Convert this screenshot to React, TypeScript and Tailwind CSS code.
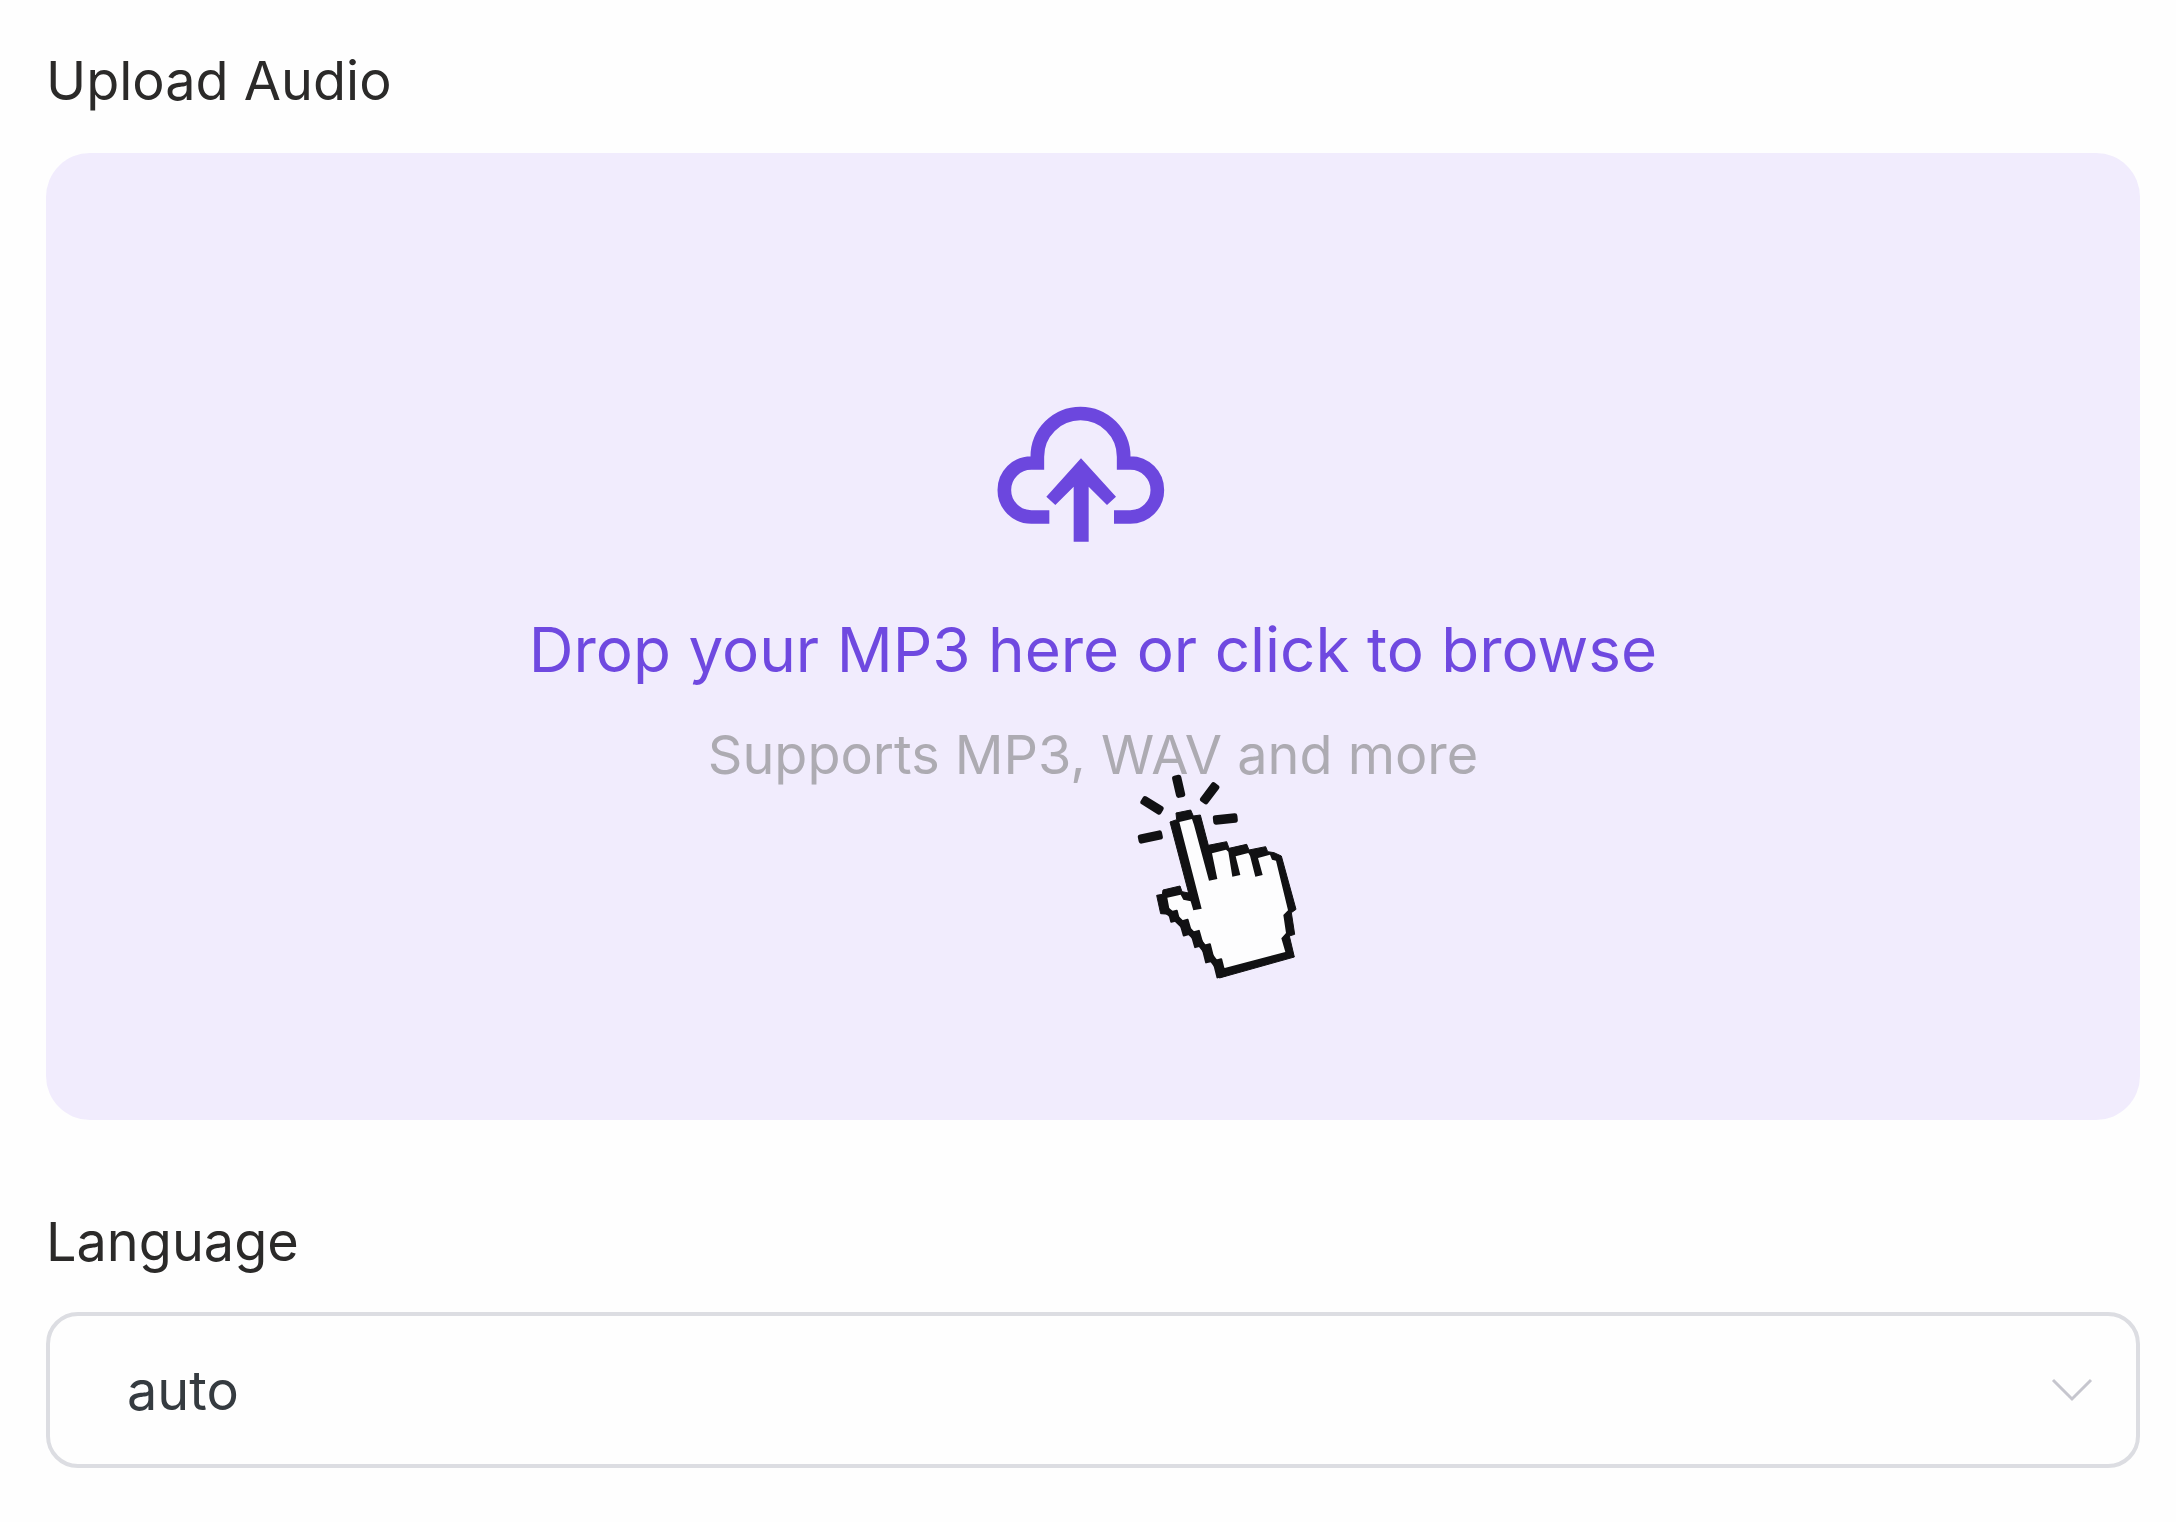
const labelStyle = "block text-[54px] leading-[64px] text-[#2b2a29]";

function CloudUploadIcon() {
  return (
    <svg viewBox="50 48 504 408" className="mr-[24px] h-[136px] w-[168px]" aria-hidden="true">
      <path
        d="M207 381H153a81 81 0 0 1 0-162h18v-19a129.500 129.500 0 0 1 259 0v19h20a81 81 0 0 1 0 162h-49"
        fill="none"
        stroke="#6c47de"
        strokeWidth="41"
      />
      <path d="M302 205 407 320 380 345 325 290V455H280V290L225 345 198 320Z" fill="#6c47de" />
    </svg>
  );
}

function ClickCursor() {
  return (
    <svg
      viewBox="0 0 600 690"
      className="pointer-events-none absolute top-1/2 left-1/2 mt-[124px] ml-[27px] h-[230px] w-[200px]"
      aria-hidden="true"
    >
      <g fill="#111113">
        <rect x="-34" y="-14" width="68" height="28" rx="8" transform="translate(176 76) rotate(77)" />
        <rect x="-35" y="-14" width="70" height="28" rx="8" transform="translate(269 97) rotate(-53)" />
        <rect x="-36" y="-14" width="72" height="28" rx="8" transform="translate(96 133) rotate(32)" />
        <rect x="-37" y="-14" width="74" height="28" rx="8" transform="translate(91 228) rotate(-12)" />
        <rect x="-37" y="-14" width="74" height="28" rx="8" transform="translate(316 174) rotate(-6)" />
        <path
          stroke="#111113"
          strokeWidth="3"
          strokeLinejoin="round"
          d="M150 183 170 176 168 156 212 147 220 165 241 162 265 253 320 242 327 262 380 250 387 267 437 257 443 272 462 275 484 285 528 445 514 455 524 520 508 525 523 588 298 651 288 606 264 577 231 534 197 500 162 466 150 460 122 458 110 403 127 400 129 387 180 375 186 392 206 396Z"
        />
      </g>
      <path
        fill="#fdfdfe"
        d="M178 183 216 174 222 192 267 359 292 354 276 277 318 266 325 272 337 347 361 342 347 286 385 276 390 284 406 347 428 342 414 291 450 281 456 296 468 299 504 448 490 462 498 516 484 532 496 573 314 621 297 608 264 577 231 534 197 500 162 466 149 448 142 410 182 401 190 416 212 421 220 448 245 443Z"
      />
      <path d="M140 448 162 466 197 500 231 534 264 577 298 622" fill="none" stroke="#111113" strokeWidth="20" />
      <g fill="#111113">
        <rect x="-15" y="-17" width="30" height="34" rx="3" transform="translate(162 466) rotate(-14)" />
        <rect x="-15" y="-24" width="30" height="48" rx="3" transform="translate(197 500) rotate(-16)" />
        <rect x="-15" y="-25" width="30" height="50" rx="3" transform="translate(231 534) rotate(-16)" />
        <rect x="-15" y="-28" width="30" height="56" rx="3" transform="translate(264 577) rotate(-14)" />
        <rect x="-15" y="-28" width="30" height="56" rx="3" transform="translate(298 622) rotate(-14)" />
      </g>
    </svg>
  );
}

export default function App() {
  return (
    <main className="min-h-screen bg-[#fefefe] pt-[49px] pr-[36px] pb-[52px] pl-[46px] font-['Inter',sans-serif]">
      <label htmlFor="audio" className={labelStyle}>
        Upload Audio
      </label>
      <button
        id="audio"
        type="button"
        className="relative mt-[40px] flex w-full cursor-pointer flex-col items-center rounded-[44px] bg-[#f1ecfd] pt-[253px] pb-[331px]"
      >
        <CloudUploadIcon />
        <span className="mt-[70px] text-[62px] leading-[76px] text-[#6f49e0]">
          Drop your MP3 here or click to browse
        </span>
        <span className="mt-[33px] text-[54px] leading-[68px] text-[#adabb2]">
          Supports MP3, WAV and more
        </span>
        <ClickCursor />
      </button>

      <label htmlFor="language" className={`${labelStyle} mt-[90px]`}>
        Language
      </label>
      <div className="relative mt-[38px]">
        <select
          id="language"
          defaultValue="auto"
          className="block h-[156px] w-full appearance-none rounded-[32px] border-4 border-[#dcdde2] bg-[#fefefe] pr-[120px] pl-[77px] text-[54px] text-[#353b40]"
        >
          <option value="auto">auto</option>
        </select>
        <svg
          viewBox="0 0 42 24"
          className="pointer-events-none absolute top-1/2 right-[47px] h-[24px] w-[42px] -translate-y-1/2"
          fill="none"
          stroke="#c6c6ce"
          strokeWidth="3"
          aria-hidden="true"
        >
          <path d="M2 2 21 21 40 2" />
        </svg>
      </div>
    </main>
  );
}
